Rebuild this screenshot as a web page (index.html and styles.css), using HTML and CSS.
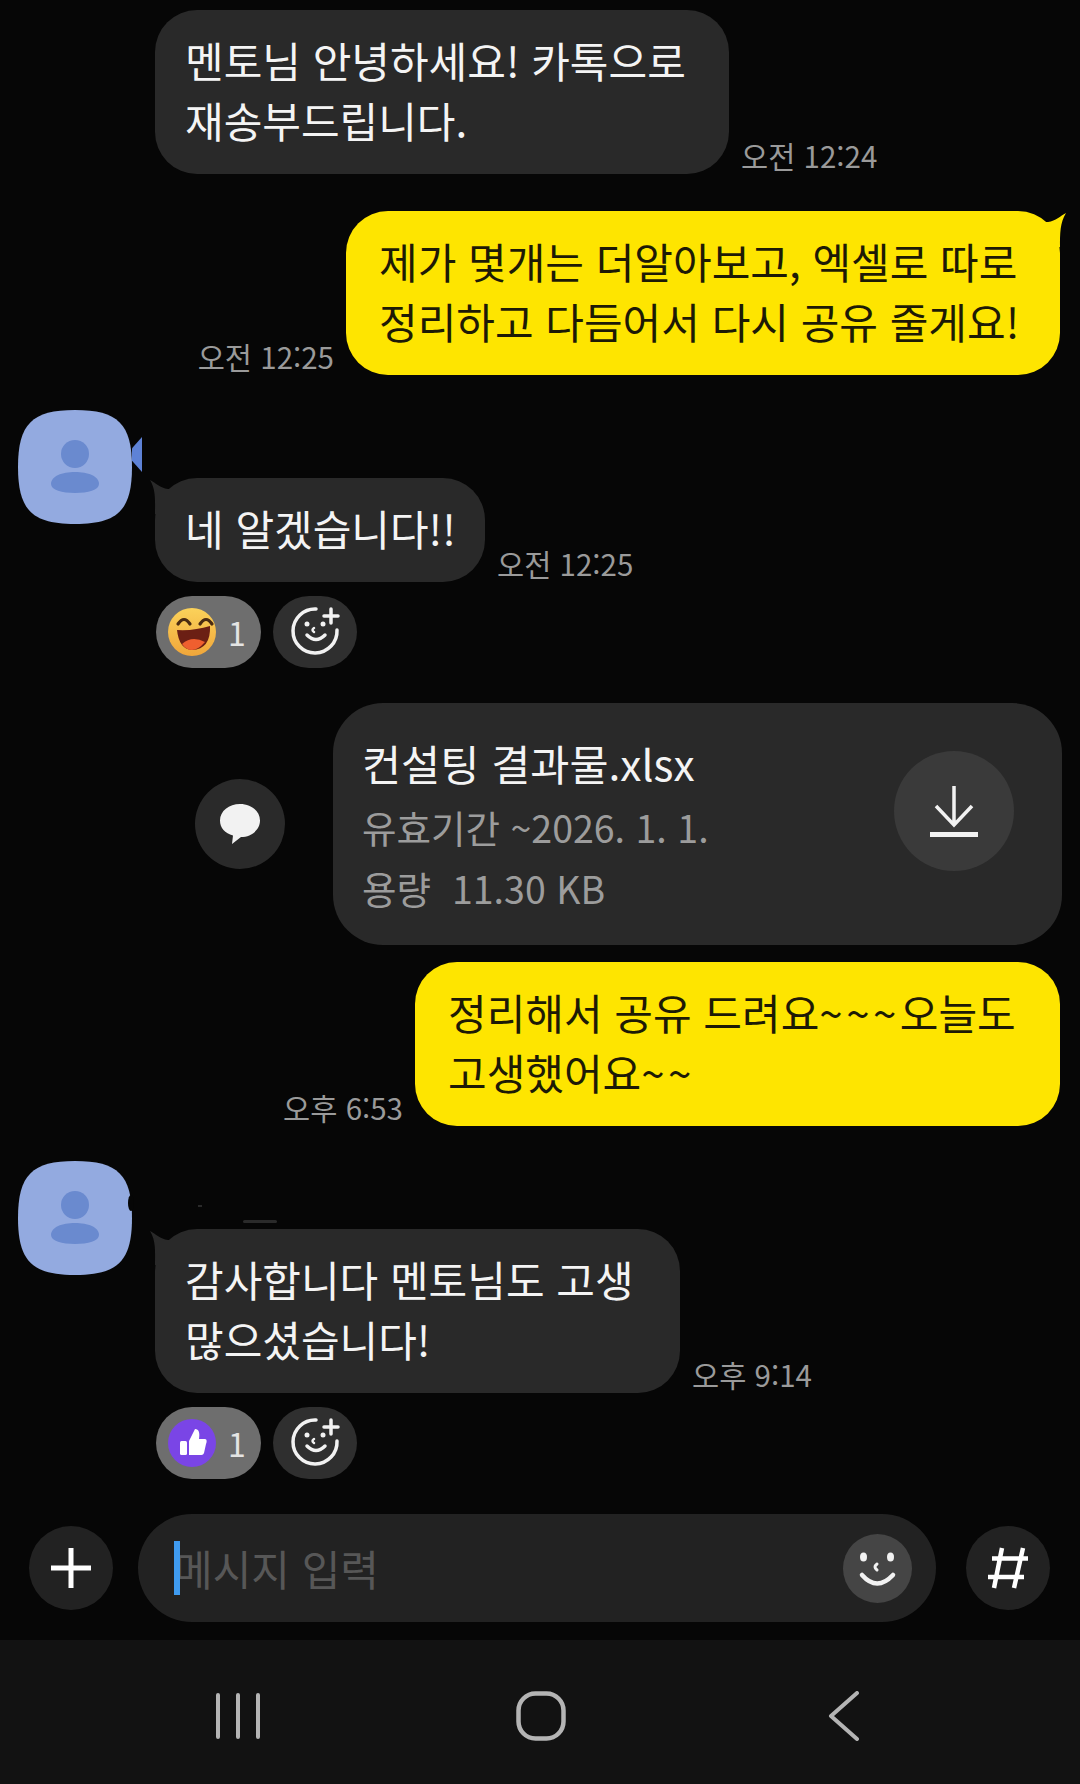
FILE: index.html
```html
<!DOCTYPE html>
<html lang="ko">
    <head>
        <title>chat</title>
        <meta charset="utf-8" />
        <meta name="viewport" content="width=device-width, initial-scale=1.0" />
        <link rel="stylesheet" href="styles.css">
    </head>
    <body>
        <svg class="defs" width="0" height="0">
            <defs>
                <linearGradient id="face" x1="0" y1="0" x2="0" y2="1">
                    <stop offset="0" stop-color="#fbd25a" />
                    <stop offset="1" stop-color="#f0a63a" />
                </linearGradient>
                <g id="avatar-shape">
                    <path fill="#93aae0" d="M57 0C100 0 114 14 114 57S100 114 57 114S0 100 0 57S14 0 57 0Z" />
                    <circle fill="#6a8acf" cx="57" cy="44" r="14" />
                    <path fill="#6a8acf" d="M33 74C33 66 44 62 57 62S81 66 81 74C81 80 70 83 57 83S33 80 33 74Z" />
                </g>
                <g id="add-reaction">
                    <path fill="none" stroke="#f2f2f2" stroke-width="3.5" stroke-linecap="round" d="M29 5A22 22 0 1 0 50 26" />
                    <path fill="none" stroke="#f2f2f2" stroke-width="3.5" stroke-linecap="round" d="M44 5V19M37 12H51" />
                    <circle fill="#f2f2f2" cx="20" cy="20" r="2.5" />
                    <circle fill="#f2f2f2" cx="36" cy="20" r="2.5" />
                    <path fill="none" stroke="#f2f2f2" stroke-width="2.5" stroke-linecap="round" d="M27 24Q24 26 27 28" />
                    <path fill="none" stroke="#f2f2f2" stroke-width="3.5" stroke-linecap="round" d="M20 31Q29 40 38 31" />
                </g>
            </defs>
        </svg>
        <div id="app">
            <div id="messages">
                <div class="row row-plain">
                    <div class="bubble theirs w1">멘토님 안녕하세요! 카톡으로<br>재송부드립니다.</div>
                    <span class="time">오전 12:24</span>
                </div>
                <div class="row row-mine gap-37">
                    <span class="time">오전 12:25</span>
                    <div class="bubble mine tail-mine w2">제가 몇개는 더알아보고, 엑셀로 따로<br>정리하고 다듬어서 다시 공유 줄게요!</div>
                </div>
                <div class="group gap-35">
                    <div class="avatar">
                        <svg width="114" height="114" viewBox="0 0 114 114"><use href="#avatar-shape" /></svg>
                        <span class="call-mark"></span>
                    </div>
                    <div class="group-body">
                        <div class="row">
                            <div class="bubble theirs tail-theirs w3">네 알겠습니다!!</div>
                            <span class="time">오전 12:25</span>
                        </div>
                        <div class="reactions">
                            <div class="pill">
                                <svg width="48" height="48" viewBox="0 0 48 48">
                                    <circle cx="24" cy="24" r="24" fill="url(#face)" />
                                    <path fill="none" stroke="#4a2b12" stroke-width="3.2" stroke-linecap="round" d="M10 16Q16 7 22 16M32 16Q38 7 44 16" />
                                    <path fill="#6b1f14" d="M9 22Q26 23 42 18Q43 41 24 42Q11 41 9 22Z" />
                                    <path fill="#ef5f2f" d="M14 36Q24 27 37 34Q30 42 24 42Q18 42 14 36Z" />
                                </svg>
                                <span class="count">1</span>
                            </div>
                            <div class="add">
                                <svg width="56" height="56" viewBox="0 0 56 56"><use href="#add-reaction" /></svg>
                            </div>
                        </div>
                    </div>
                </div>
                <div class="row row-mine gap-35 file-row">
                    <div class="share">
                        <svg width="40" height="40" viewBox="0 0 40 40">
                            <path fill="#f2f2f2" d="M20 0C31 0 40 7 40 16.5C40 26 31 33 21 33L12 40L13 31.5C5 29.5 0 24 0 16.5C0 7 9 0 20 0Z" />
                        </svg>
                    </div>
                    <div class="file">
                        <div class="file-info">
                            <div class="file-name">컨설팅 결과물.xlsx</div>
                            <div class="file-meta">유효기간 ~2026. 1. 1.</div>
                            <div class="file-meta">용량&nbsp;&nbsp;11.30 KB</div>
                        </div>
                        <div class="download">
                            <svg width="50" height="52" viewBox="0 0 50 52">
                                <path fill="none" stroke="#f2f2f2" stroke-width="3.5" d="M25 1V40M7 21L25 40L43 21" />
                                <path stroke="#f2f2f2" stroke-width="5" d="M1 49.5H49" />
                            </svg>
                        </div>
                    </div>
                </div>
                <div class="row row-mine gap-17">
                    <span class="time">오후 6:53</span>
                    <div class="bubble mine w4">정리해서 공유 드려요<span class="tilde">~~~</span>오늘도<br>고생했어요<span class="tilde">~~</span></div>
                </div>
                <div class="group gap-35">
                    <div class="avatar">
                        <svg width="114" height="114" viewBox="0 0 114 114"><use href="#avatar-shape" /></svg>
                        <span class="notch"></span>
                        <span class="smudge smudge-dot"></span>
                        <span class="smudge smudge-line"></span>
                    </div>
                    <div class="group-body">
                        <div class="row">
                            <div class="bubble theirs tail-theirs w5">감사합니다 멘토님도 고생<br>많으셨습니다!</div>
                            <span class="time">오후 9:14</span>
                        </div>
                        <div class="reactions">
                            <div class="pill">
                                <svg width="48" height="48" viewBox="0 0 48 48">
                                    <circle cx="24" cy="24" r="24" fill="#7a45e6" />
                                    <rect x="12" y="22" width="7" height="14" rx="1.5" fill="#fff" />
                                    <path fill="#fff" d="M21 22L27 10C31 10 32 14 31 20H37C39 20 39 23 38 25L36 34C35 36 34 36 32 36H21Z" />
                                </svg>
                                <span class="count">1</span>
                            </div>
                            <div class="add">
                                <svg width="56" height="56" viewBox="0 0 56 56"><use href="#add-reaction" /></svg>
                            </div>
                        </div>
                    </div>
                </div>
            </div>
            <div id="composer">
                <div class="round">
                    <svg width="42" height="42" viewBox="0 0 42 42">
                        <path fill="none" stroke="#fff" stroke-width="5" d="M21 1V41M1 21H41" />
                    </svg>
                </div>
                <div class="input">
                    <span class="caret"></span>
                    <span class="placeholder">메시지 입력</span>
                    <div class="emoji">
                        <svg width="40" height="40" viewBox="0 0 40 40">
                            <ellipse fill="#f2f2f2" cx="5.5" cy="9" rx="3.5" ry="4.5" />
                            <ellipse fill="#f2f2f2" cx="32.5" cy="9" rx="3.5" ry="4.5" />
                            <path fill="none" stroke="#f2f2f2" stroke-width="3" stroke-linecap="round" d="M19 16Q15 19 19 22" />
                            <path fill="none" stroke="#f2f2f2" stroke-width="4.5" stroke-linecap="round" d="M4 27Q19 44 35 27" />
                        </svg>
                    </div>
                </div>
                <div class="round">
                    <svg width="42" height="42" viewBox="0 0 42 42">
                        <path fill="none" stroke="#fff" stroke-width="4.5" d="M15 1L7 41M36 1L27 41M5 11.5H41M1 30H37" />
                    </svg>
                </div>
            </div>
            <div id="nav">
                <svg width="44" height="46" viewBox="0 0 44 46">
                    <path fill="none" stroke="#b4b4b4" stroke-width="4" stroke-linecap="round" d="M2 2V44M22 2V44M42 2V44" />
                </svg>
                <svg class="nav-home" width="50" height="50" viewBox="0 0 50 50">
                    <rect x="2.5" y="2.5" width="45" height="45" rx="17" fill="none" stroke="#b4b4b4" stroke-width="4.5" />
                </svg>
                <svg width="32" height="50" viewBox="0 0 32 50">
                    <path fill="none" stroke="#b4b4b4" stroke-width="4" stroke-linecap="round" stroke-linejoin="round" d="M29 2L3 25L29 48" />
                </svg>
            </div>
        </div>
    </body>
</html>
```

FILE: styles.css
```css
html, body {
    margin: 0px;
    padding: 0px;
    background: #060606;
    font-family: "Noto Sans CJK KR", "Noto Sans", sans-serif;
}
.defs {
    display: block;
    position: absolute;
}
#app {
    display: flex;
    flex-direction: column;
    height: 1784px;
    overflow: hidden;
}
#messages {
    flex: 1;
    padding-top: 10px;
}
.row {
    display: flex;
    align-items: flex-end;
    gap: 12px;
}
.row-plain {
    padding-left: 155px;
}
.row-mine {
    justify-content: flex-end;
    padding-right: 20px;
}
.gap-17 {
    margin-top: 17px;
}
.gap-35 {
    margin-top: 35px;
}
.gap-37 {
    margin-top: 37px;
}
.time {
    margin-bottom: 2px;
    font-size: 29.5px;
    line-height: 34px;
    color: #9a9a9a;
    white-space: nowrap;
}
.bubble {
    position: relative;
    box-sizing: border-box;
    padding: 20px 0px 24px 30px;
    border-radius: 42px;
    font-size: 42px;
    line-height: 60px;
    white-space: nowrap;
}
.theirs {
    background: #292929;
    color: #f4f4f4;
}
.mine {
    padding-left: 33px;
    background: #fee500;
    color: #1d1a05;
}
.tilde {
    letter-spacing: 3.5px;
}
.tail-theirs::before, .tail-mine::before {
    content: "";
    position: absolute;
    top: 2px;
    width: 30px;
    height: 34px;
    background: inherit;
}
.tail-theirs::before {
    left: -5px;
    clip-path: path("M0 0C6 3 10 8 18 9L30 9L30 34L5 34C5 20 6 10 0 0Z");
}
.tail-mine::before {
    right: -6px;
    clip-path: path("M30 0C24 3 20 8 12 9L0 9L0 34L24 34C24 20 24 10 30 0Z");
}
.w1 {
    width: 574px;
}
.w2 {
    width: 714px;
}
.w3 {
    width: 330px;
}
.w4 {
    width: 645px;
}
.w5 {
    width: 525px;
}
.group {
    display: flex;
    gap: 23px;
    padding-left: 18px;
}
.avatar {
    position: relative;
    width: 114px;
    height: 114px;
}
.avatar svg {
    display: block;
}
.call-mark {
    position: absolute;
    top: 27px;
    left: 114px;
    width: 10px;
    height: 35px;
    background: #5e82d6;
    clip-path: polygon(100% 0%, 100% 100%, 0% 68%, 0% 32%);
}
.notch {
    position: absolute;
    top: 34px;
    left: 110px;
    width: 6px;
    height: 16px;
    border-radius: 50%;
    background: #060606;
}
.smudge {
    position: absolute;
    background: #2a2a2a;
}
.smudge-dot {
    top: 44px;
    left: 180px;
    width: 4px;
    height: 2px;
}
.smudge-line {
    top: 59px;
    left: 225px;
    width: 34px;
    height: 3px;
    border-radius: 2px;
}
.group-body {
    padding-top: 68px;
}
.reactions {
    display: flex;
    gap: 12px;
    margin: 14px 0px 0px 1px;
}
.pill {
    display: flex;
    align-items: center;
    gap: 12px;
    box-sizing: border-box;
    padding-left: 12px;
    width: 105px;
    height: 72px;
    border-radius: 36px;
    background: #6e6e6e;
}
.count {
    font-size: 32px;
    color: #e4e4e4;
    line-height: 1;
}
.add {
    display: flex;
    align-items: center;
    justify-content: center;
    width: 84px;
    height: 72px;
    border-radius: 36px;
    background: #2f2f2f;
}
.file-row {
    gap: 48px;
    align-items: center;
    padding-right: 18px;
}
.share {
    display: flex;
    align-items: center;
    justify-content: center;
    width: 90px;
    height: 90px;
    border-radius: 50%;
    background: #2a2a2a;
}
.file {
    display: flex;
    justify-content: space-between;
    box-sizing: border-box;
    padding: 27px 48px 0px 29px;
    width: 729px;
    height: 242px;
    border-radius: 50px;
    background: #292929;
}
.file-name {
    font-size: 42.5px;
    line-height: 66px;
    color: #f4f4f4;
}
.file-meta {
    font-size: 37.5px;
    line-height: 61px;
    color: #9c9c9c;
}
.download {
    display: flex;
    align-items: center;
    justify-content: center;
    margin-top: 21px;
    width: 120px;
    height: 120px;
    border-radius: 50%;
    background: #3a3a3a;
}
#composer {
    display: flex;
    align-items: center;
    gap: 25px;
    padding: 0px 30px 18px 29px;
}
.round {
    display: flex;
    align-items: center;
    justify-content: center;
    width: 84px;
    height: 84px;
    border-radius: 50%;
    background: #222222;
}
.input {
    position: relative;
    display: flex;
    align-items: center;
    box-sizing: border-box;
    margin-right: 5px;
    padding: 0px 24px 0px 36px;
    width: 798px;
    height: 108px;
    border-radius: 54px;
    background: #222222;
}
.caret {
    position: absolute;
    top: 27px;
    left: 36px;
    width: 6px;
    height: 54px;
    background: #3f9bf0;
}
.placeholder {
    flex: 1;
    font-size: 42px;
    line-height: 60px;
    color: #575757;
}
.emoji {
    display: flex;
    align-items: center;
    justify-content: center;
    width: 69px;
    height: 69px;
    border-radius: 50%;
    background: #454545;
}
#nav {
    display: flex;
    align-items: center;
    box-sizing: border-box;
    padding: 8px 0px 0px 216px;
    height: 144px;
    background: #121212;
}
.nav-home {
    margin: 0px 262px 0px 256px;
}
```
